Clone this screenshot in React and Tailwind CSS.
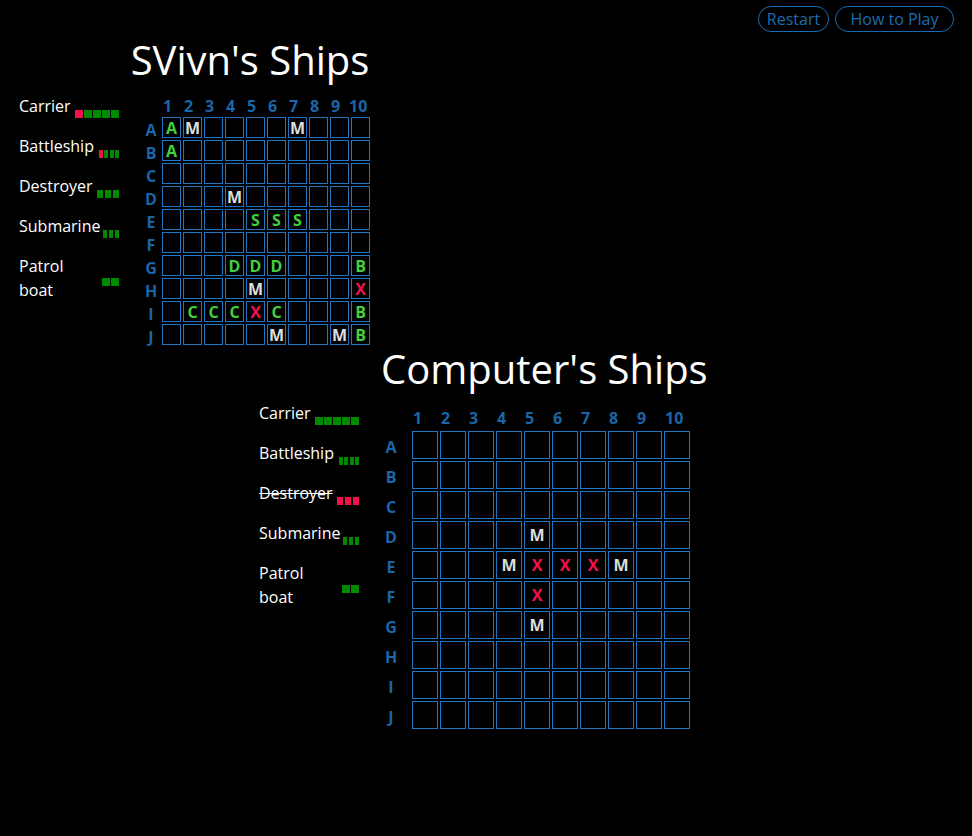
import React from "react";

const RED = "bg-[#f5104a]";
const GREEN = "bg-[#008a00]";

const playerShips = [
  { name: "Carrier", w: "w-[44px]", n: 5, hit: [0] },
  { name: "Battleship", w: "w-[20px]", n: 4, hit: [0] },
  { name: "Destroyer", w: "w-[22px]", n: 3, hit: [] },
  { name: "Submarine", w: "w-[16px]", n: 3, hit: [] },
  { name: "Patrol boat", w: "w-[17px]", n: 2, hit: [] },
];

const computerShips = [
  { name: "Carrier", w: "w-[44px]", n: 5, hit: [] },
  { name: "Battleship", w: "w-[20px]", n: 4, hit: [] },
  { name: "Destroyer", w: "w-[22px]", n: 3, hit: [0, 1, 2], sunk: true },
  { name: "Submarine", w: "w-[16px]", n: 3, hit: [] },
  { name: "Patrol boat", w: "w-[17px]", n: 2, hit: [] },
];

const playerMarks = {
  A1: "A", A2: "M", A7: "M",
  B1: "A",
  D4: "M",
  E5: "S", E6: "S", E7: "S",
  G4: "D", G5: "D", G6: "D", G10: "B",
  H5: "M", H10: "X",
  I2: "C", I3: "C", I4: "C", I5: "X", I6: "C", I10: "B",
  J6: "M", J9: "M", J10: "B",
};

const computerMarks = {
  D5: "M",
  E4: "M", E5: "X", E6: "X", E7: "X", E8: "M",
  F5: "X",
  G5: "M",
};

const ROWS = ["A", "B", "C", "D", "E", "F", "G", "H", "I", "J"];
const COLS = [1, 2, 3, 4, 5, 6, 7, 8, 9, 10];

function markColor(m) {
  if (m === "M") return "text-[#dedede]";
  if (m === "X") return "text-[#f5104a]";
  return "text-[#45cf3e]";
}

function ShipList({ ships }) {
  return (
    <div className="w-[100px] flex flex-col gap-4 shrink-0">
      {ships.map((s) => {
        const patrol = s.name === "Patrol boat";
        return (
          <div key={s.name} className="flex justify-between items-center leading-6">
            <span className={`whitespace-nowrap ${s.sunk ? "line-through" : ""}`}>
              {patrol ? (
                <>
                  Patrol
                  <br />
                  boat
                </>
              ) : (
                s.name
              )}
            </span>
            <div className={`flex gap-[1.5px] h-[8px] ${s.w} ${patrol ? "mt-[8px]" : "mt-[16px]"}`}>
              {Array.from({ length: s.n }).map((_, i) => (
                <div key={i} className={`flex-1 ${s.hit.includes(i) ? RED : GREEN}`} />
              ))}
            </div>
          </div>
        );
      })}
    </div>
  );
}

function Board({ marks, small }) {
  const grid = small
    ? "grid-cols-[18px_repeat(10,19px)] auto-rows-[21px]"
    : "grid-cols-[38px_repeat(10,26px)] auto-rows-[28px]";
  return (
    <div className={`grid ${grid} gap-[2px] font-bold text-[16px]`}>
      <div />
      {COLS.map((c) => (
        <div
          key={c}
          className={`flex items-center pl-[1px] text-[#1a66a8] ${small ? "pt-[3px]" : "pt-[5px]"} ${
            small && c === 10 ? "-ml-[3px]" : ""
          }`}
        >
          {c}
        </div>
      ))}
      {ROWS.map((r) => (
        <React.Fragment key={r}>
          <div className="flex items-center justify-center pt-[4px] text-[#1a66a8]">{r}</div>
          {COLS.map((c) => {
            const m = marks[r + c];
            return (
              <div key={c} className="border border-[#1e76c2] flex items-center justify-center">
                {m && <span className={markColor(m)}>{m}</span>}
              </div>
            );
          })}
        </React.Fragment>
      ))}
    </div>
  );
}

export default function App() {
  return (
    <div className="min-h-screen bg-black text-white font-['Open_Sans',sans-serif] text-[16px]">
      <div className="flex justify-end gap-[6px] pt-[6px] pr-[18px]">
        <button className="w-[71px] h-[26px] rounded-full border border-[#1b6cb0] text-[#1b6cb0] flex items-center justify-center">
          Restart
        </button>
        <button className="w-[119px] h-[26px] rounded-full border border-[#1b6cb0] text-[#1b6cb0] flex items-center justify-center">
          How to Play
        </button>
      </div>

      <h1 className="ml-[90px] w-[320px] mt-[4px] text-center text-[40px] leading-[48px] font-medium whitespace-nowrap">
        SVivn's Ships
      </h1>
      <div className="flex items-start mt-[10px] pl-[19px] gap-[23px]">
        <ShipList ships={playerShips} />
        <Board marks={playerMarks} small />
      </div>

      <h1 className="ml-[381px] w-[321px] text-center text-[40px] leading-[48px] font-medium whitespace-nowrap">
        Computer's Ships
      </h1>
      <div className="flex items-start mt-[8px] pl-[259px] gap-[13px] pb-[100px]">
        <ShipList ships={computerShips} />
        <Board marks={computerMarks} />
      </div>
    </div>
  );
}
